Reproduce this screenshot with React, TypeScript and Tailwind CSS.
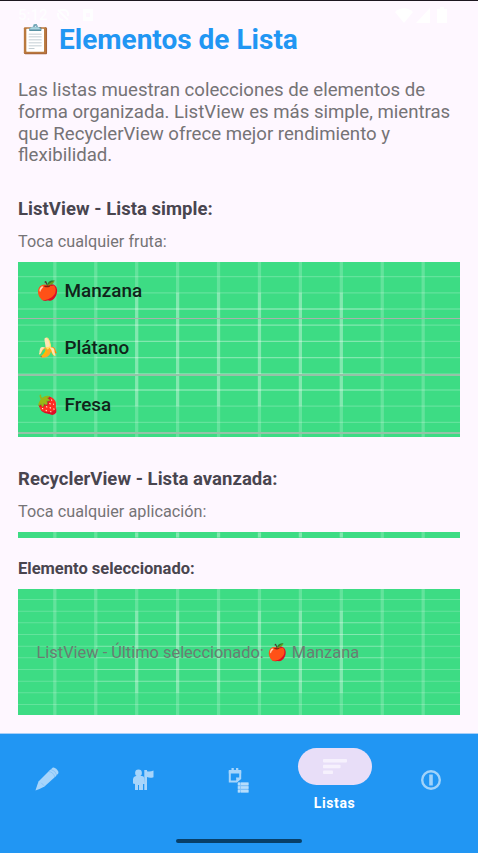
import React from "react";

const OUTER = [9, 19, 29, 39, 49, 59, 69, 79, 89, 99];
const INNER = [29, 39, 49, 59, 69, 79];

function GridBackground({ columnsOnly = false }: { columnsOnly?: boolean }) {
  return (
    <svg
      className="absolute inset-0 h-full w-full"
      viewBox="0 0 108 108"
      preserveAspectRatio="none"
      stroke="#ffffff"
      strokeOpacity="0.2"
      strokeWidth="0.8"
    >
      <rect width="108" height="108" fill="#3ddc84" stroke="none" />
      {OUTER.map((p) => (
        <path key={`v${p}`} d={`M${p} 0V108`} />
      ))}
      {!columnsOnly && OUTER.map((p) => <path key={`h${p}`} d={`M0 ${p}H108`} />)}
      {!columnsOnly && INNER.map((p) => <path key={`ih${p}`} d={`M19 ${p}H89`} />)}
      {INNER.map((p) => (
        <path key={`iv${p}`} d={`M${p} 19V89`} />
      ))}
    </svg>
  );
}

function StatusBar() {
  return (
    <div className="absolute inset-x-0 top-0 flex h-7 items-center justify-between border-t border-[#1d1720] pt-[1px] pr-[31px] pl-[18px] text-white">
      <div className="flex items-center gap-[8px] opacity-90">
        <span className="text-[15px] leading-none font-medium">5:12</span>
        <svg width="14" height="14" viewBox="0 0 14 14" fill="none" stroke="currentColor" strokeWidth="2">
          <path d="M2 2l10 10M4 2h4a4 4 0 0 1 4 4v2M2 5v2a5 5 0 0 0 5 5" />
        </svg>
        <svg className="ml-[4px]" width="12" height="12" viewBox="0 0 12 12" fill="currentColor" fillRule="evenodd">
          <path d="M1 0h10v12H1zM4 4v4h4V4z" />
        </svg>
      </div>
      <div className="flex items-center gap-[3px]">
        <svg width="18" height="15" viewBox="0 0 18 15" fill="currentColor">
          <path d="M9 15L0 4C5-1 13-1 18 4z" />
        </svg>
        <svg width="14" height="15" viewBox="0 0 14 15" fill="currentColor">
          <path d="M14 0v15H0z" />
        </svg>
        <svg className="ml-[4px]" width="10" height="16" viewBox="0 0 10 16" fill="currentColor">
          <path d="M3 0h4v2h3v14H0V2h3z" />
        </svg>
      </div>
    </div>
  );
}

function Fruit({ icon, name }: { icon: string; name: string }) {
  return (
    <li className="flex h-[57px] items-center border-b-2 border-[#96c2a8] pt-[3px] pl-[18.5px] text-[18.9px] leading-none text-[#10241a] first:border-b first:border-[#a6b5ac] first:pt-[2px] last:h-[58px]">
      <span className="w-[28px] text-[18.5px]">{icon}</span>
      <span className="font-medium">{name}</span>
    </li>
  );
}

function PencilIcon() {
  return (
    <svg width="26" height="26" viewBox="0 0 26 26" fill="#a7d5fb">
      <path d="M1.5 24.5Q3 19.5 4.5 15.5L15.5 4.5L21.5 10.5L10.5 20.5Q6 23 1.5 24.5z" />
      <path d="M15 5L18.6 1.8C20.5.4 25.6 5.2 24.2 7.4L21 11z" />
      <path d="M14.5 5.5Q19.5 6 20.8 11M16.8 3.4Q21.5 4.5 22.8 9.2M7.2 16.8l3 3" fill="none" stroke="#73b9f3" strokeWidth="0.6" />
    </svg>
  );
}

function PersonFlagIcon() {
  return (
    <svg width="24" height="24" viewBox="0 0 24 24" fill="#a7d5fb">
      <circle cx="7.5" cy="5" r="3.4" />
      <path d="M5 8H11Q13 8 13.2 10L14 16H12V22H8V17H7V22H4V16L2 15.5V11Q2.2 8.5 5 8z" />
      <path d="M13.3 2H16V3.2Q19 4 22.5 2.5V9.2Q19 10.5 16 9V22H13.3z" />
    </svg>
  );
}

function NoteListIcon() {
  return (
    <svg width="24" height="28" viewBox="0 0 24 28">
      <path d="M3.8 5.8H14.2V12.5L10.5 15.5H3.8z" fill="none" stroke="#a7d5fb" strokeWidth="2" />
      <path d="M2.8 4H15.2V7.5H2.8zM5.5 2H7.8V5H5.5zM10 2H12.3V5H10zM10 11.5H15L10.5 16.5z" fill="#a7d5fb" />
      <path d="M11.8 16.5H22.5V26.5H11.8z" fill="#7fc1f9" />
      <path d="M11.8 16.5H14V19H11.8zM14.8 16.5H22.5V19H14.8zM11.8 20.3H14V22.8H11.8zM14.8 20.3H22.5V22.8H14.8zM11.8 24H14V26.5H11.8zM14.8 24H22.5V26.5H14.8z" fill="#b5ddfc" />
    </svg>
  );
}

function BottomNav() {
  return (
    <nav className="relative grid h-[120px] shrink-0 grid-cols-5 border-t border-[#a9cff8] bg-[#2196f3]">
      <div className="flex justify-center pt-[32px] pr-[2px]"><PencilIcon /></div>
      <div className="flex justify-center pt-[34px]"><PersonFlagIcon /></div>
      <div className="flex justify-center pt-[32px] pr-[1px]"><NoteListIcon /></div>
      <div className="flex flex-col items-center">
        <div className="mt-[14px] flex h-[37px] w-[74px] justify-center rounded-full bg-[#e8def8] pt-[10px]">
          <svg width="26" height="18" viewBox="0 0 26 18" fill="#f6f1fd">
            <rect x="1" y="1" width="24" height="3.4" rx="0.8" />
            <rect x="1" y="6.8" width="17.5" height="3.4" rx="0.8" />
            <rect x="1" y="12.6" width="10" height="3.4" rx="0.8" />
          </svg>
        </div>
        <span className="mt-[10px] text-[14px] leading-[16px] font-bold tracking-[0.6px] text-white">Listas</span>
      </div>
      <div className="flex justify-center pt-[35px] pl-[1px]">
        <svg width="22" height="22" viewBox="0 0 22 22" fill="none" stroke="#a0d3fa">
          <circle cx="11" cy="11" r="8.8" strokeWidth="2.4" />
          <path d="M11 5.5V16.5" strokeWidth="3.6" />
        </svg>
      </div>
      <div className="absolute bottom-[10px] left-[176px] h-[4px] w-[126px] rounded-full bg-[#083f68]" />
    </nav>
  );
}

export default function App() {
  return (
    <div className="relative flex h-[853px] w-[478px] flex-col overflow-hidden bg-[#fef7ff] font-['Roboto','Noto_Color_Emoji',sans-serif] text-[#49454f]">
      <StatusBar />
      <main className="relative flex-1 px-[18px] pt-[23px]">
        <h1 className="flex h-[34px] items-center text-[28px] leading-none font-bold text-[#2196f3]">
          <span className="w-[41px] text-[28px]">📋</span>
          <span className="whitespace-nowrap">Elementos de Lista</span>
        </h1>
        <p className="mt-[23px] text-[18.62px] leading-[21.8px] whitespace-nowrap text-[#757376]">
          Las listas muestran colecciones de elementos de
          <br />
          forma organizada. ListView es más simple, mientras
          <br />
          que RecyclerView ofrece mejor rendimiento y
          <br />
          flexibilidad.
        </p>
        <h2 className="mt-[29.8px] text-[18.5px] leading-[24px] font-bold tracking-[0.04px]">ListView - Lista simple:</h2>
        <p className="mt-[11px] text-[16.2px] leading-[20px] tracking-[0.05px] text-[#757376]">Toca cualquier fruta:</p>
        <section className="relative mt-[10px] h-[175px] overflow-hidden">
          <GridBackground />
          <ul className="relative">
            <Fruit icon="🍎" name="Manzana" />
            <Fruit icon="🍌" name="Plátano" />
            <Fruit icon="🍓" name="Fresa" />
          </ul>
        </section>
        <h2 className="mt-[30px] text-[18.5px] leading-[24px] font-bold tracking-[0.04px]">RecyclerView - Lista avanzada:</h2>
        <p className="mt-[11px] text-[16.2px] leading-[20px] tracking-[0.05px] text-[#757376]">Toca cualquier aplicación:</p>
        <div className="relative mt-[10px] h-[6px]">
          <GridBackground columnsOnly />
        </div>
        <h3 className="mt-[20px] text-[16.5px] leading-[22px] font-bold">Elemento seleccionado:</h3>
        <section className="relative mt-[9px] flex h-[126px] items-center pt-[3px] pl-[18.5px] text-[16.4px] text-[#6b7d73]">
          <GridBackground />
          <p className="relative flex items-center whitespace-nowrap">
            <span>ListView - Último seleccionado:</span>
            <span className="ml-[4px] w-[24px]">🍎</span>
            <span>Manzana</span>
          </p>
        </section>
      </main>
      <BottomNav />
    </div>
  );
}
